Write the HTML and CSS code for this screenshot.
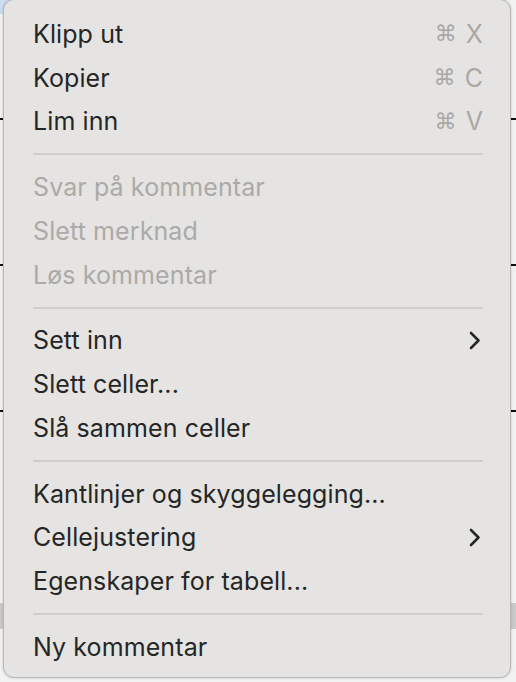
FILE: index.html
```html
<!DOCTYPE html>
<html lang="no">
<head>
<meta charset="utf-8">
<title>Kontekstmeny</title>
<link rel="stylesheet" href="styles.css">
</head>
<body>
<div class="doc">
  <div class="sel"></div>
  <div class="rule r1"></div>
  <div class="rule r2"></div>
  <div class="rule r3"></div>
  <div class="band"></div>
</div>
<div class="menu">
  <div class="item"><span class="label">Klipp ut</span><span class="key"><span class="cmd">⌘</span>X</span></div>
  <div class="item"><span class="label">Kopier</span><span class="key"><span class="cmd">⌘</span>C</span></div>
  <div class="item"><span class="label">Lim inn</span><span class="key"><span class="cmd">⌘</span>V</span></div>
  <div class="sep"></div>
  <div class="item off"><span class="label">Svar på kommentar</span></div>
  <div class="item off"><span class="label">Slett merknad</span></div>
  <div class="item off"><span class="label">Løs kommentar</span></div>
  <div class="sep"></div>
  <div class="item"><span class="label">Sett inn</span><svg class="chev" width="12" height="19" viewBox="0 0 12 19"><path d="M2 2 L9.5 9.5 L2 17" fill="none" stroke="#262626" stroke-width="2.6" stroke-linecap="round" stroke-linejoin="round"/></svg></div>
  <div class="item"><span class="label">Slett celler...</span></div>
  <div class="item"><span class="label">Slå sammen celler</span></div>
  <div class="sep"></div>
  <div class="item"><span class="label">Kantlinjer og skyggelegging...</span></div>
  <div class="item"><span class="label">Cellejustering</span><svg class="chev" width="12" height="19" viewBox="0 0 12 19"><path d="M2 2 L9.5 9.5 L2 17" fill="none" stroke="#262626" stroke-width="2.6" stroke-linecap="round" stroke-linejoin="round"/></svg></div>
  <div class="item"><span class="label">Egenskaper for tabell...</span></div>
  <div class="sep"></div>
  <div class="item"><span class="label">Ny kommentar</span></div>
</div>
</body>
</html>
```
FILE: styles.css
```css
html, body {
  margin: 0;
  padding: 0;
  width: 516px;
  height: 682px;
  overflow: hidden;
}
body {
  background: #f2f2f2;
  font-family: Inter, "Noto Sans", "Liberation Sans", sans-serif;
  position: relative;
}
.doc {
  position: absolute;
  inset: 0;
}
.sel {
  position: absolute;
  left: 0;
  top: 0;
  width: 14px;
  height: 14px;
  background: #cddcf0;
}
.rule {
  position: absolute;
  left: 0;
  right: 0;
  height: 2px;
  background: #111;
}
.r1 { top: 118px; }
.r2 { top: 264px; }
.r3 { top: 410px; }
.band {
  position: absolute;
  left: 0;
  right: 0;
  top: 603px;
  height: 26px;
  background: #cacaca;
}
.menu {
  position: absolute;
  left: 3px;
  top: -1px;
  width: 508px;
  height: 679px;
  box-sizing: border-box;
  border: 1px solid #b8b8b8;
  border-radius: 11px;
  background: #e5e4e2;
  box-shadow: 0 0 3px rgba(0,0,0,0.18);
  padding: 12px 0 8px;
  display: flex;
  flex-direction: column;
}
.item {
  height: 44px;
  display: flex;
  align-items: center;
  justify-content: space-between;
  padding: 0 27px 0 29px;
  font-size: 25px;
  color: #262626;
  letter-spacing: 0.1px;
}
.item.off {
  color: #abaaa8;
}
.key {
  color: #a9a8a6;
  display: flex;
  align-items: center;
}
.cmd {
  margin-right: 9px;
  font-family: "DejaVu Sans", sans-serif;
  font-size: 22px;
}
.chev {
  margin-right: 2px;
}
.sep {
  height: 2px;
  margin: 10px 27px 10px 29px;
  background: #cfcecc;
}
```
